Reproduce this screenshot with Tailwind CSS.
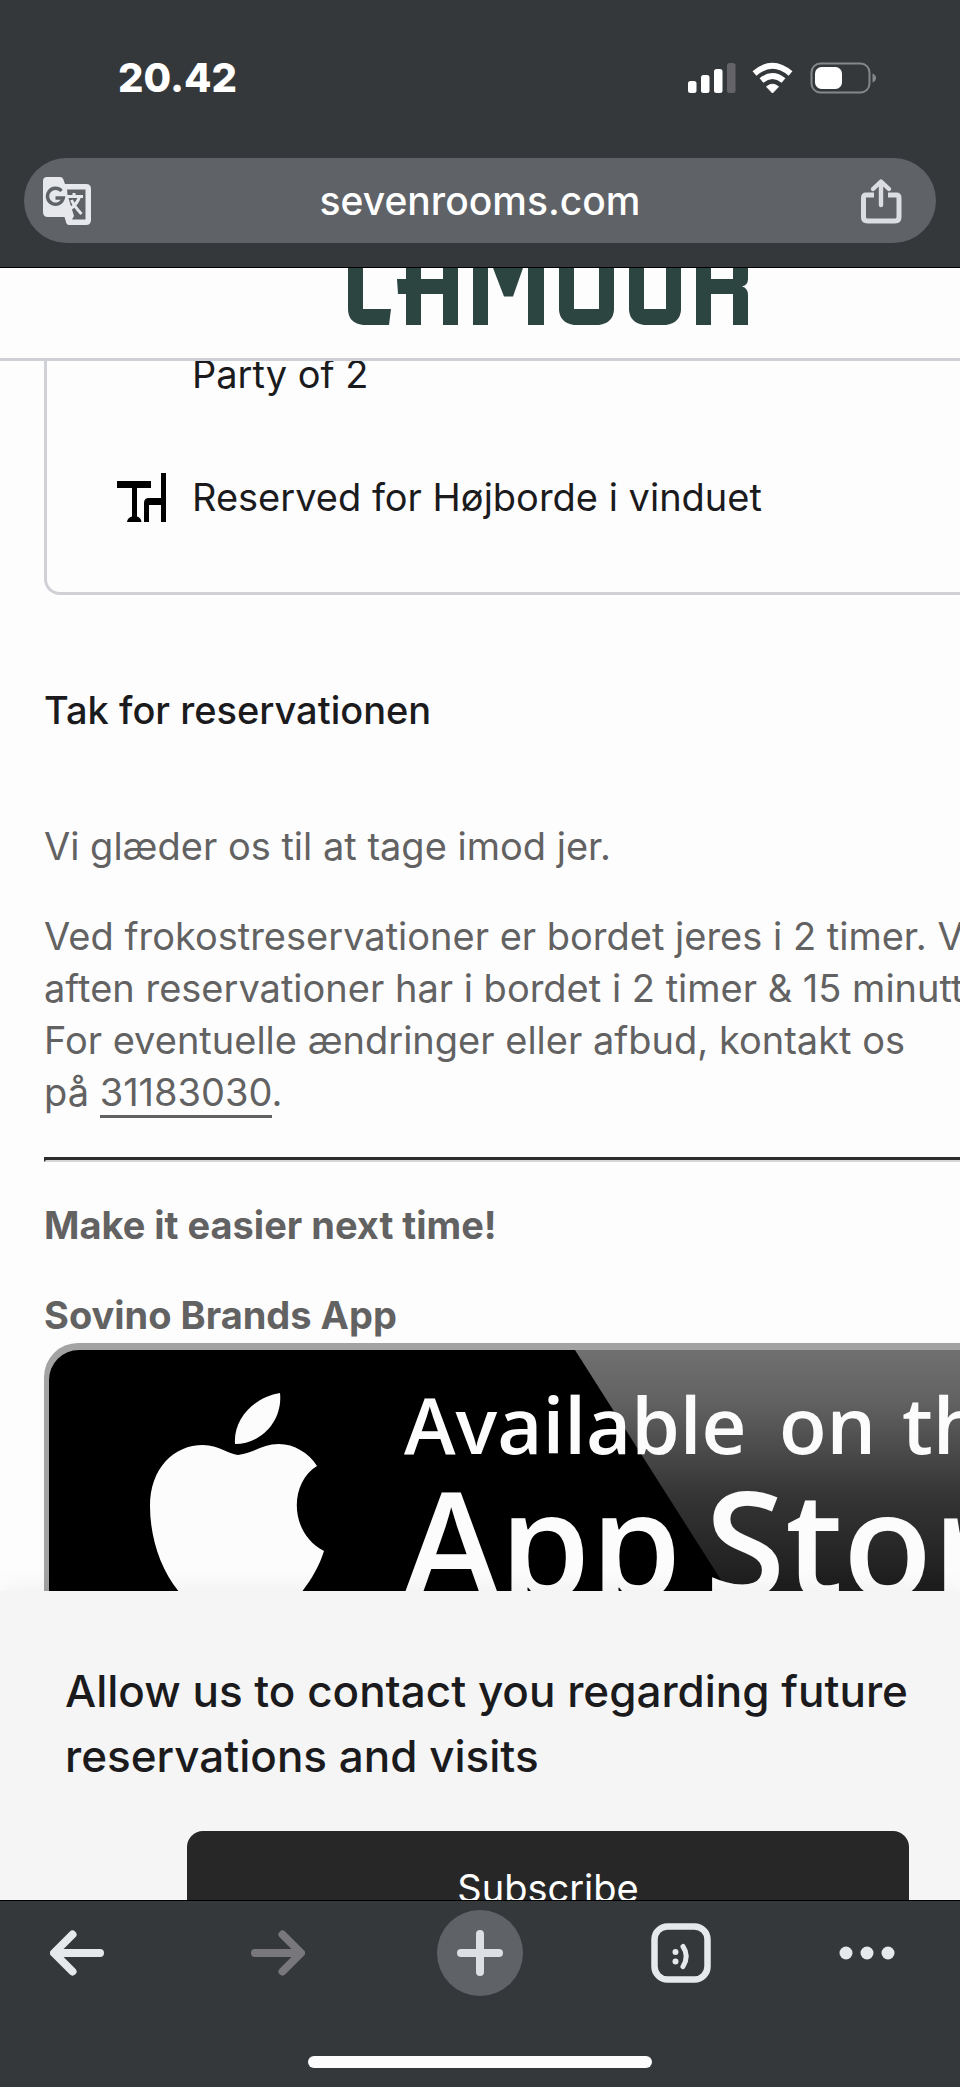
<!DOCTYPE html>
<html lang="da">
<head>
<meta charset="utf-8">
<meta name="viewport" content="width=device-width, initial-scale=1">
<title>sevenrooms.com</title>
<script src="https://cdn.jsdelivr.net/npm/@tailwindcss/browser@4"></script>
</head>
<body class="flex min-h-screen flex-col overflow-x-hidden bg-[#fdfdfe] font-['Inter','Liberation_Sans',sans-serif] text-[38px] leading-[52px] text-[#1b1b1d]">

<!-- Status bar and address bar -->
<div class="border-b border-black bg-[#35383b] px-6 pb-6 text-white">
  <div class="flex items-center justify-between pt-[52px] pr-[60px] pb-[54px] pl-[94px]">
    <time class="text-[40px] font-extrabold">20.42</time>
    <svg class="h-8 w-[188px]" viewBox="0 0 188 32" fill="#fff" aria-label="Signal, Wi-Fi, batteri">
      <rect x="0" y="19" width="8.500" height="12" rx="2.5"/>
      <rect x="13" y="13" width="8.500" height="18" rx="2.5"/>
      <rect x="26" y="7" width="8.500" height="24" rx="2.5"/>
      <rect x="39" y="1" width="8.500" height="30" rx="2.5" fill="#646468"/>
      <path d="M84.500 31L78.500 24.700Q84.500 19.700 90.500 24.700Z" stroke="#fff" stroke-width="1" stroke-linejoin="round"/>
      <path d="M73.500 18.500Q84.500 9.500 95.500 18.500" fill="none" stroke="#fff" stroke-width="6"/>
      <path d="M66.500 11.500Q84.500 -4 102.500 11.500" fill="none" stroke="#fff" stroke-width="6"/>
      <rect x="123.500" y="1.500" width="58" height="29" rx="9" fill="none" stroke="#86878b" stroke-width="2"/>
      <rect x="127" y="5" width="27" height="22" rx="6.500"/>
      <path d="M184.500 11.500Q188 13 188 16T184.500 20.500Z" fill="#86878b"/>
    </svg>
  </div>
  <div class="flex h-[85px] items-center justify-between rounded-full bg-[#5f6368] pr-[34px] pl-[19px]">
    <button type="button" aria-label="Oversæt" class="flex w-[57px]">
      <svg class="size-12" viewBox="0 0 48 48">
        <path d="M4 0H17Q19.500 0 20.300 2.300L22 7H43Q48 7 48 12V43Q48 48 43 48H26Q24 48 23.300 46L21.500 40H5Q0 40 0 35V4Q0 0 4 0Z" fill="#e6e8ec"/>
        <path d="M24 12.500H42.500V42.500H29L31 39L24.500 18Z" fill="#5f6368"/>
        <path d="M24 19.500H40M31 16V19.500M36.500 19.500Q34.500 27 27 32M28.500 23Q31 29 38.500 37" fill="none" stroke="#e6e8ec" stroke-width="3"/>
        <path d="M18.500 14A8 8 0 1 0 20.300 21H12.500" fill="none" stroke="#5f6368" stroke-width="3.400"/>
      </svg>
    </button>
    <button type="button" class="text-[39px] leading-[50px] font-medium">sevenrooms.com</button>
    <button type="button" aria-label="Del" class="flex">
      <svg class="h-[46px] w-[42px]" viewBox="0 0 42 46" fill="none" stroke="#dcdde2" stroke-width="5" stroke-linecap="round" stroke-linejoin="round">
        <path d="M21 27V4M13 11L21 3.500L29 11" stroke-width="4.400"/>
        <path d="M14 17H6Q3.500 17 3.500 20V39Q3.500 43 7.500 43H35Q39 43 39 39V20Q39 17 36.500 17H28" stroke-linecap="butt"/>
      </svg>
    </button>
  </div>
</div>

<!-- Venue header, scrolled under the address bar -->
<header class="flex justify-center border-b-[3px] border-[#d0d1d7] pb-[33px] pl-[136px]">
  <svg class="h-[57px] w-[400px]" viewBox="0 0 400 57" fill="#2c4541" role="img" aria-label="Lamour">
    <path d="M0 0H15V41H43L41 57H15Q0 55 0 41Z"/>
    <path d="M58 0H73V11H95V0H110V57H95V26H73V57H58V26H50L49 11H58Z"/>
    <path d="M125 0H140V57H125ZM145 0H175L165 28.500H156ZM180 0H196V57H180Z"/>
    <path d="M211 0H226V41H251V0H266V42Q265 55 251 57H226Q212 55 211 42Z"/>
    <path d="M281 0H296V41H318V0H333V42Q332 55 318 57H296Q282 55 281 42Z"/>
    <path d="M348 0H363V11H385V0H400V11Q400 17 394 18.500Q400 20 400 27V57H385V26H363V57H348Z"/>
  </svg>
</header>

<main class="flex-1 overflow-hidden whitespace-nowrap pl-11">
  <section class="-mr-8 rounded-bl-2xl border-b-[3px] border-l-[3px] border-[#d0d1d7] pb-[69px] pl-[70px]">
    <p class="pl-[75px] leading-[26px]">Party of 2</p>
    <div class="mt-[84px] flex items-center gap-[26px]">
      <svg class="size-[49px]" viewBox="0 0 49 49" fill="#000" aria-hidden="true">
        <path d="M0 8H34V15H20V43.500Q24 44.500 24.500 49H10Q10.500 44.500 15 43.500V15H0Z"/>
        <path d="M44 0H49V49H44V32H32V49H27V30Q27 25 32 25H44Z"/>
      </svg>
      <p>Reserved for Højborde i vinduet</p>
    </div>
  </section>

  <h1 class="mt-[89px] font-medium">Tak for reservationen</h1>
  <div class="text-[#636262]">
    <p class="mt-[84px]">Vi glæder os til at tage imod jer.</p>
    <p class="mt-[38px]">Ved frokostreservationer er bordet jeres i 2 timer. Ved<br>aften reservationer har i bordet i 2 timer &amp; 15 minutter.<br>For eventuelle ændringer eller afbud, kontakt os<br>på <a href="tel:31183030" class="border-b-[3px] border-[#636262]">31183030</a>.</p>
    <hr class="mt-[39px] h-[5px] border-t-[3px] border-b-2 border-l-2 border-t-[#2c2d2c] border-b-[#d6d6d6] border-l-[#2c2d2c]">
    <p class="mt-[37px] font-bold">Make it easier next time!</p>
    <p class="mt-[38px] font-bold">Sovino Brands App</p>
  </div>
  <a href="#appstore" class="mt-0.5 block">
    <svg class="h-[248px] w-full overflow-hidden" role="img" aria-label="Available on the App Store">
      <defs>
        <linearGradient id="gloss" x1="0" y1="0" x2="0" y2="1">
          <stop offset="0" stop-color="#707070"/>
          <stop offset="0.200" stop-color="#636363"/>
          <stop offset="0.600" stop-color="#353535"/>
          <stop offset="1" stop-color="#1c1c1c"/>
        </linearGradient>
      </defs>
      <rect x="0" y="0" width="1200" height="400" rx="34" fill="#a3a3a3"/>
      <rect x="5" y="7" width="1200" height="400" rx="30" fill="#000"/>
      <path d="M531 7H1200V248H684Z" fill="url(#gloss)"/>
      <g fill="#fcfcfc">
        <path d="M236 50C211 54 189 75 191 101C217 101 239 78 236 50Z"/>
        <path d="M194 112C212 109 219 101 235 101C250 101 265 110 273 123C245 140 245 190 280 208C275 224 267 237 257 250H136C117 228 106 195 106 163C106 125 130 102 159 102C175 102 184 111 194 112Z"/>
      </g>
      <g fill="#fcfcfc" class="font-['Open_Sans','Noto_Sans',sans-serif] font-semibold">
        <g class="text-[78px]">
          <text x="360" y="111">Available</text>
          <text x="735" y="111">on</text>
          <text x="858" y="111">the</text>
        </g>
        <g class="text-[146px]">
          <text x="359" y="255">App</text>
          <text x="661" y="255">Store</text>
        </g>
      </g>
    </svg>
  </a>
</main>

<!-- Marketing opt-in sheet -->
<section class="bg-[#f5f5f5] pt-[68px] pr-[51px] pl-[65px] shadow-[0_-2px_24px_rgba(0,0,0,0.06)]">
  <h2 class="text-[44px] leading-[65px] font-medium">Allow us to contact you regarding future reservations and visits</h2>
  <div class="mt-[42px] ml-[122px] h-[69px] overflow-hidden">
    <button type="button" class="w-full rounded-2xl bg-[#272727] py-[31px] text-white">Subscribe</button>
  </div>
</section>

<!-- Browser toolbar -->
<nav class="relative border-t border-black bg-[#35383b] pb-[19px]" aria-label="Browser">
  <div class="flex items-center justify-between pt-2 pr-[65px] pl-[34px]">
    <button type="button" aria-label="Tilbage" class="flex h-[88px] w-[86px] items-center justify-center">
      <svg class="h-[46px] w-[54px]" viewBox="0 0 54 46" fill="none" stroke="#e6e9ec" stroke-width="8" stroke-linecap="round" stroke-linejoin="round"><path d="M50 23H5M22.500 4.500L4 23L22.500 41.500"/></svg>
    </button>
    <button type="button" aria-label="Frem" class="flex h-[88px] w-[86px] items-center justify-center">
      <svg class="h-[46px] w-[54px]" viewBox="0 0 54 46" fill="none" stroke="#78787c" stroke-width="8" stroke-linecap="round" stroke-linejoin="round"><path d="M4 23H49M31.500 4.500L50 23L31.500 41.500"/></svg>
    </button>
    <button type="button" aria-label="Ny fane" class="flex size-[86px] items-center justify-center rounded-full bg-[#5f6368]">
      <svg class="size-[46px]" viewBox="0 0 46 46" fill="none" stroke="#dcdfe3" stroke-width="8" stroke-linecap="round"><path d="M4 23H42M23 4V42"/></svg>
    </button>
    <button type="button" aria-label="Faner" class="flex h-[88px] w-[86px] items-center justify-center">
      <svg class="size-[60px]" viewBox="0 0 60 60" fill="#e6e9ec">
        <rect x="3.500" y="3.500" width="53" height="53" rx="13" fill="none" stroke="#e6e9ec" stroke-width="6.500"/>
        <circle cx="24.500" cy="29" r="3"/><circle cx="24.500" cy="38.500" r="3"/>
        <path d="M32 23.500Q38.500 33 32 43.500" fill="none" stroke="#e6e9ec" stroke-width="5" stroke-linecap="round"/>
      </svg>
    </button>
    <button type="button" aria-label="Mere" class="flex h-[88px] w-14 items-center justify-center">
      <svg class="h-[14px] w-14" viewBox="0 0 56 14" fill="#e6e9ec"><circle cx="7" cy="7" r="6.500"/><circle cx="28" cy="7" r="6.500"/><circle cx="49" cy="7" r="6.500"/></svg>
    </button>
  </div>
  <div class="mx-auto mt-[59px] h-3 w-[344px] rounded-full bg-[#fdfdfe]"></div>
</nav>
</body>
</html>
